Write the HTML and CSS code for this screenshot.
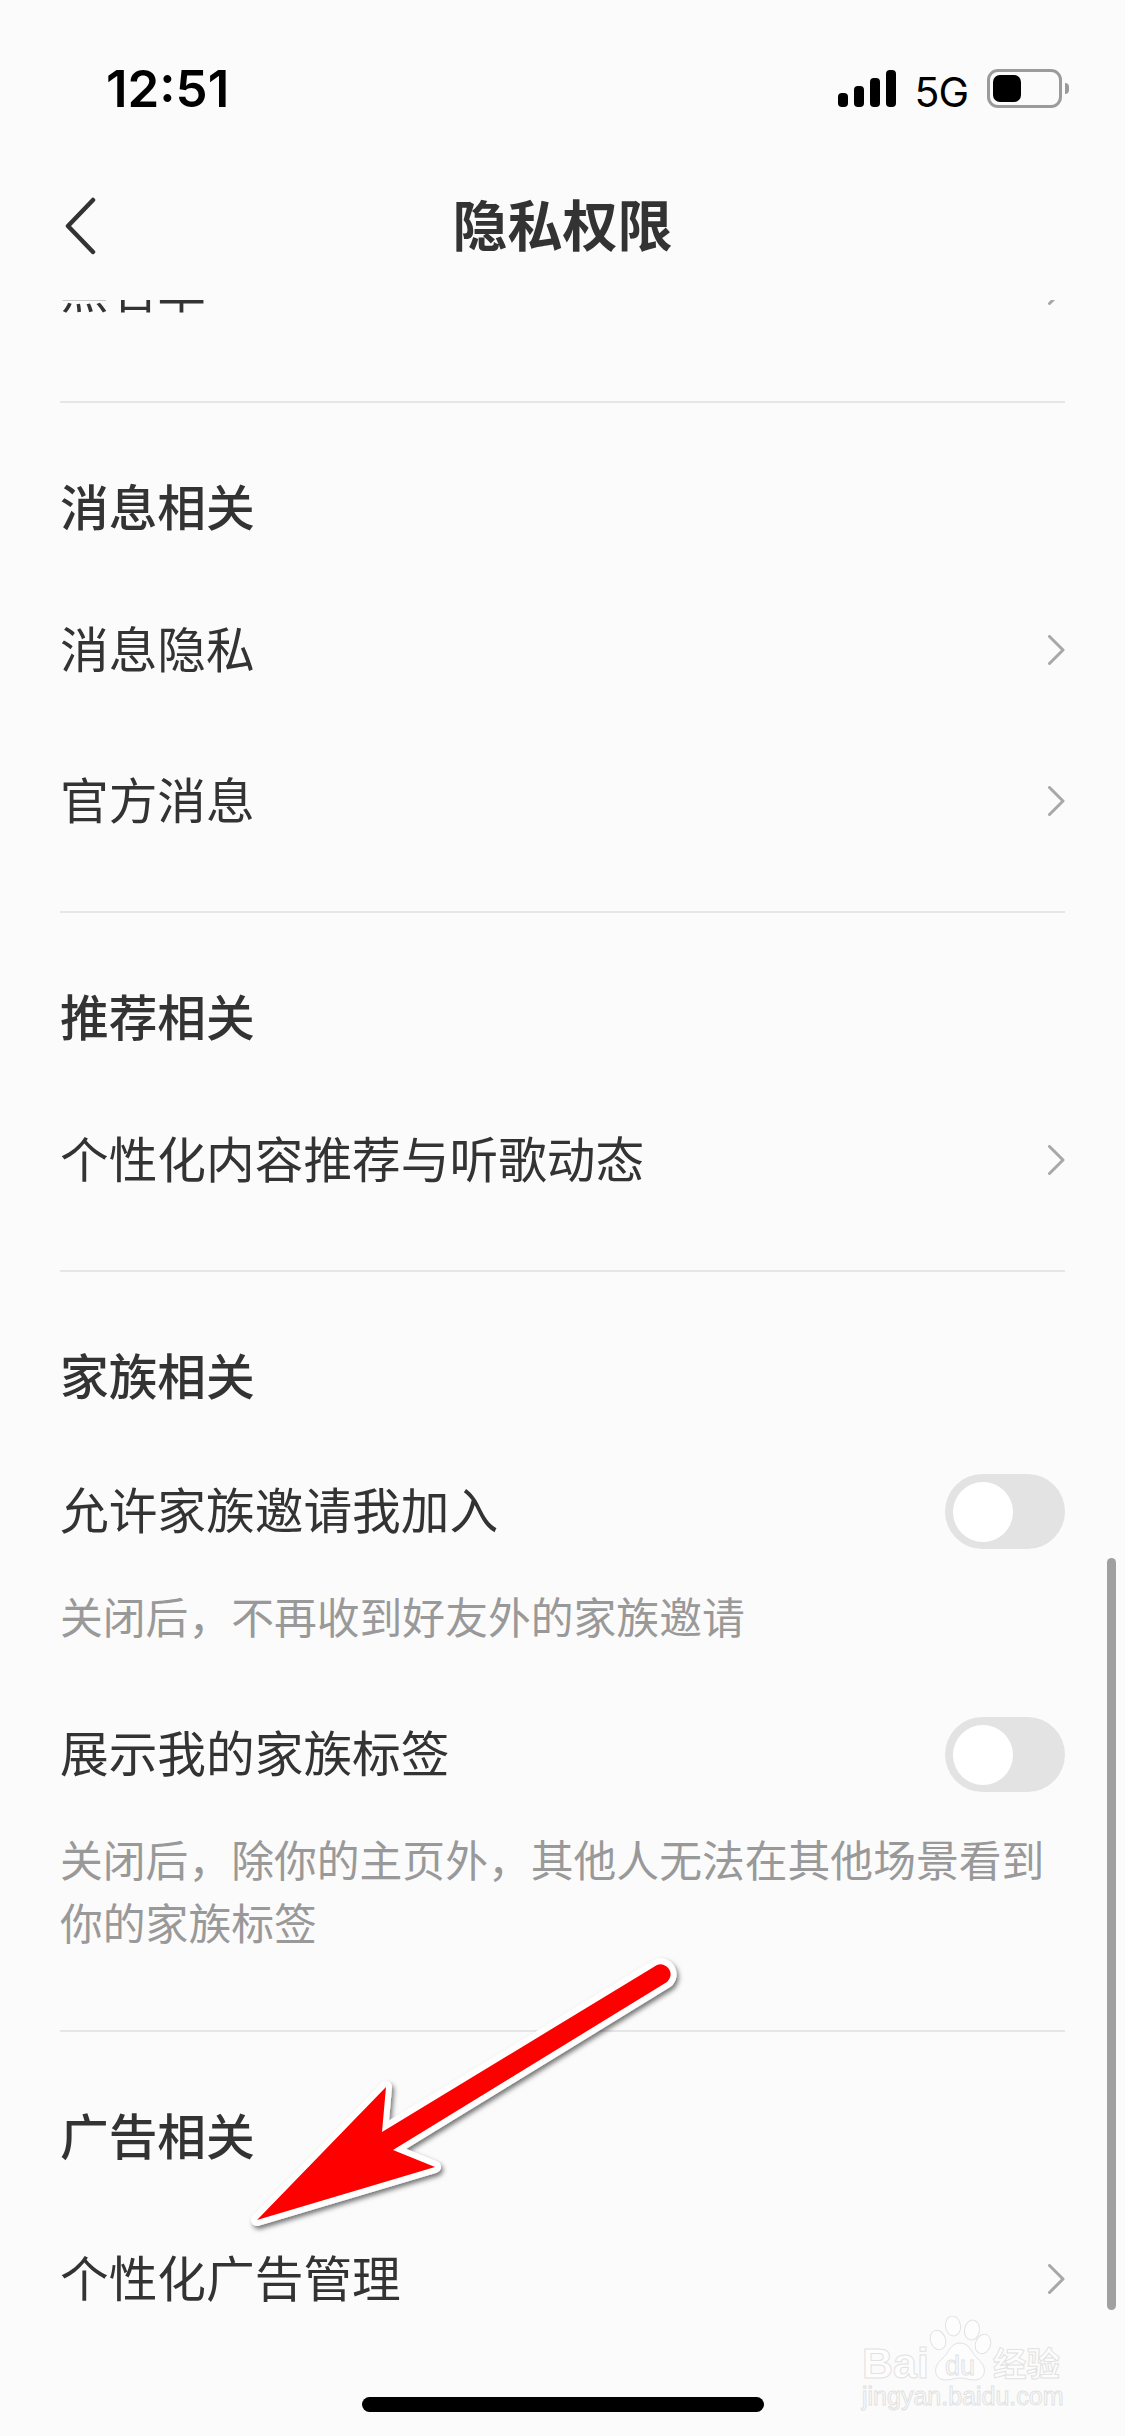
FILE: index.html
```html
<!DOCTYPE html>
<html lang="zh-CN">
<head>
    <meta charset="UTF-8">
    <meta name="viewport" content="width=device-width, initial-scale=1.0">
    <title>隐私权限</title>
    <link rel="stylesheet" href="styles.css">
</head>
<body>
    <div class="phone">
        <div class="status-bar">
            <span class="time">12:51</span>
            <div class="status-icons">
                <div class="signal">
                    <i class="bar-1"></i><i class="bar-2"></i><i class="bar-3"></i><i class="bar-4"></i>
                </div>
                <span class="network">5G</span>
                <div class="battery"><div class="battery-level"></div></div>
                <div class="battery-cap"></div>
            </div>
        </div>

        <div class="nav-bar">
            <svg class="back" width="34" height="58" viewBox="0 0 34 58">
                <path d="M30 3 L5 29 L30 55" fill="none" stroke="#333" stroke-width="4.5" stroke-linecap="round" stroke-linejoin="round"/>
            </svg>
            <h1>隐私权限</h1>
        </div>

        <div class="content">
            <div class="scroll-top">
                <div class="row">
                    <span>黑名单</span>
                    <svg class="chevron" width="18" height="30" viewBox="0 0 18 30"><path d="M1.5 1.5 L15 15 L1.5 28.5"/></svg>
                </div>
            </div>

            <section class="section">
                <h2>消息相关</h2>
                <div class="row">
                    <span>消息隐私</span>
                    <svg class="chevron" width="18" height="30" viewBox="0 0 18 30"><path d="M1.5 1.5 L15 15 L1.5 28.5"/></svg>
                </div>
                <div class="row">
                    <span>官方消息</span>
                    <svg class="chevron" width="18" height="30" viewBox="0 0 18 30"><path d="M1.5 1.5 L15 15 L1.5 28.5"/></svg>
                </div>
            </section>

            <section class="section">
                <h2>推荐相关</h2>
                <div class="row">
                    <span>个性化内容推荐与听歌动态</span>
                    <svg class="chevron" width="18" height="30" viewBox="0 0 18 30"><path d="M1.5 1.5 L15 15 L1.5 28.5"/></svg>
                </div>
            </section>

            <section class="section family">
                <h2>家族相关</h2>
                <div class="switch-row">
                    <span>允许家族邀请我加入</span>
                    <div class="switch"><div class="knob"></div></div>
                </div>
                <p class="hint">关闭后，不再收到好友外的家族邀请</p>
                <div class="switch-row">
                    <span>展示我的家族标签</span>
                    <div class="switch"><div class="knob"></div></div>
                </div>
                <p class="hint">关闭后，除你的主页外，其他人无法在其他场景看到你的家族标签</p>
            </section>

            <section class="section">
                <h2>广告相关</h2>
                <div class="row">
                    <span>个性化广告管理</span>
                    <svg class="chevron" width="18" height="30" viewBox="0 0 18 30"><path d="M1.5 1.5 L15 15 L1.5 28.5"/></svg>
                </div>
            </section>
        </div>

        <div class="scrollbar"></div>
        <div class="home-indicator"></div>

        <!-- annotation arrow pasted over the screenshot -->
        <svg class="arrow" width="470" height="300" viewBox="0 0 470 300">
            <defs>
                <filter id="arrow-shadow" x="-10%" y="-10%" width="120%" height="120%">
                    <feDropShadow dx="2" dy="3" stdDeviation="2.5" flood-color="#000" flood-opacity="0.55"/>
                </filter>
            </defs>
            <path class="arrow-body" filter="url(#arrow-shadow)" d="M27 270 L156 137 L152 182 L427 15 A10 10 0 0 1 437 32 L163 200 L205 217 Z"/>
        </svg>

        <!-- watermark -->
        <svg class="watermark" width="210" height="100" viewBox="0 0 210 100">
            <text class="wm-bai" x="2" y="62">Bai</text>
            <g class="wm-paw">
                <ellipse cx="78" cy="24" rx="7.5" ry="10" transform="rotate(-20 78 24)"/>
                <ellipse cx="93" cy="10" rx="7.5" ry="10" transform="rotate(-8 93 10)"/>
                <ellipse cx="112" cy="14" rx="7.5" ry="10" transform="rotate(10 112 14)"/>
                <ellipse cx="123" cy="28" rx="7.5" ry="10" transform="rotate(20 123 28)"/>
                <path d="M100 27 C90 27 89 37 82 43 C72 51 74 64 86 64 C92 64 94 62 100 62 C106 62 108 64 114 64 C126 64 128 51 118 43 C111 37 110 27 100 27 Z"/>
            </g>
            <text class="wm-du" x="85" y="59">du</text>
            <text class="wm-jy" x="133" y="60">经验</text>
            <text class="wm-url" x="2" y="89">jingyan.baidu.com</text>
        </svg>
    </div>
</body>
</html>
```

FILE: styles.css
```css
* {
    box-sizing: border-box;
}

html, body {
    margin: 0;
    padding: 0;
}

body {
    font-family: "Noto Sans CJK SC", "Noto Sans", sans-serif;
    background-color: #fbfbfb;
    color: #333;
}

.phone {
    position: relative;
    width: 1125px;
    height: 2436px;
    overflow: hidden;
    background-color: #fbfbfb;
    display: flex;
    flex-direction: column;
}

.status-bar {
    height: 132px;
    flex-shrink: 0;
    display: flex;
    align-items: flex-start;
    justify-content: space-between;
    padding: 58px 56px 0 106px;
}

.time {
    font-family: Inter, "Liberation Sans", sans-serif;
    font-size: 51px;
    font-weight: 600;
    line-height: 62px;
    color: #000;
}

.status-icons {
    display: flex;
    align-items: flex-end;
    height: 49px;
    position: relative;
}

.signal {
    display: flex;
    align-items: flex-end;
    gap: 6px;
    margin-right: 18px;
}

.signal i {
    display: block;
    width: 10px;
    background-color: #000;
    border-radius: 4px;
}

.bar-1 { height: 14px; }
.bar-2 { height: 21px; }
.bar-3 { height: 29px; }
.bar-4 { height: 37px; }

.network {
    font-family: Inter, "Liberation Sans", sans-serif;
    font-size: 41px;
    letter-spacing: -1px;
    line-height: 30px;
    height: 30px;
    color: #000;
    margin-right: 19px;
}

.battery {
    width: 75px;
    height: 39px;
    border: 3px solid #9b9b9b;
    border-radius: 11px;
    padding: 3px;
    margin-bottom: -1px;
}

.battery-level {
    width: 28px;
    height: 27px;
    background-color: #000;
    border-radius: 7px;
}

.battery-cap {
    width: 4px;
    height: 11px;
    margin: 0 0 13px 3px;
    background-color: #9b9b9b;
    border-radius: 0 4px 4px 0;
}

.nav-bar {
    height: 168px;
    flex-shrink: 0;
    display: flex;
    align-items: center;
    justify-content: center;
    position: relative;
}

.nav-bar h1 {
    margin: 12px 0 0;
    font-size: 55px;
    font-weight: 700;
    line-height: 60px;
    color: #333;
}

.back {
    position: absolute;
    left: 63px;
    top: 65px;
}

.content {
    flex: 1;
    overflow: hidden;
    padding: 0 60px;
}

/* the row that has scrolled up under the nav bar */
.scroll-top {
    height: 101px;
    overflow: hidden;
}

.scroll-top .row {
    margin-top: -86px;
}

.section {
    border-top: 2px solid #e6e6e6;
    padding-bottom: 35px;
}

.section h2 {
    margin: 0;
    padding-top: 66px;
    height: 171px;
    font-size: 48.7px;
    font-weight: 500;
    line-height: 72px;
    color: #333;
}

.family {
    padding-bottom: 7px;
}

.family h2 {
    height: 202px;
}

.row {
    height: 151px;
    display: flex;
    align-items: center;
    justify-content: space-between;
    font-size: 48.7px;
    line-height: 72px;
    color: #333;
}

.row span {
    margin-bottom: 5px;
}

.chevron {
    margin-right: -1px;
    fill: none;
    stroke: #a8a8a8;
    stroke-width: 3;
    stroke-linecap: round;
    stroke-linejoin: round;
}

.switch-row {
    height: 75px;
    display: flex;
    align-items: center;
    justify-content: space-between;
    font-size: 48.7px;
    line-height: 72px;
    color: #333;
}

.switch-row span {
    margin-bottom: 7px;
}

.switch {
    width: 120px;
    height: 75px;
    border-radius: 38px;
    background-color: #e3e3e3;
    padding: 8px;
}

.knob {
    width: 60px;
    height: 60px;
    border-radius: 50%;
    background-color: #fff;
}

.hint {
    margin: 35px 0 70px;
    font-size: 42.8px;
    line-height: 63px;
    color: #999;
}

.scrollbar {
    position: absolute;
    left: 1107px;
    top: 1558px;
    width: 9px;
    height: 752px;
    background-color: #a0a0a0;
    border-radius: 5px;
}

.home-indicator {
    position: absolute;
    left: 362px;
    top: 2397px;
    width: 402px;
    height: 15px;
    background-color: #000;
    border-radius: 8px;
}

.arrow {
    position: absolute;
    left: 230px;
    top: 1950px;
    overflow: visible;
}

.arrow-body {
    fill: #f00;
    stroke: #fff;
    stroke-width: 12;
    stroke-linejoin: round;
    paint-order: stroke;
}

.watermark {
    position: absolute;
    left: 860px;
    top: 2316px;
}

.watermark text,
.wm-paw {
    fill: #fdfdfd;
    stroke: #e2e2e2;
    stroke-width: 1;
}

.watermark text {
    font-family: "Liberation Sans", sans-serif;
}

.watermark .wm-bai {
    font-size: 43px;
    font-weight: 700;
}

.watermark .wm-du {
    font-size: 27px;
}

.watermark .wm-jy {
    font-family: "Noto Sans CJK SC", sans-serif;
    font-size: 33.5px;
    font-weight: 700;
}

.watermark .wm-url {
    font-size: 25px;
}
```
